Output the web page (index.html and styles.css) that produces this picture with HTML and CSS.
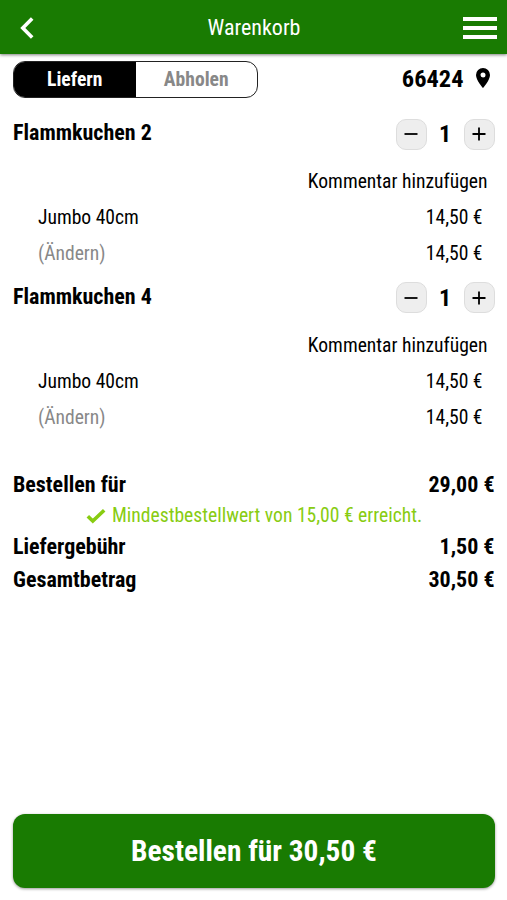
FILE: index.html
```html
<!DOCTYPE html>
<html lang="de">
<head>
    <meta charset="UTF-8">
    <meta name="viewport" content="width=device-width, initial-scale=1.0">
    <title>Warenkorb</title>
    <link rel="stylesheet" href="styles.css">
</head>
<body>
    <header class="header">
        <svg class="back" viewBox="0 0 14 22"><path d="M12.2 1.5L2.8 11l9.4 9.5"/></svg>
        <h1>Warenkorb</h1>
        <div class="burger"><span></span><span></span><span></span></div>
    </header>
    <main>
        <div class="top-row">
            <div class="toggle">
                <div class="toggle-item active">Liefern</div>
                <div class="toggle-item">Abholen</div>
            </div>
            <div class="location">
                <span>66424</span>
                <svg class="pin" viewBox="0 0 14 20"><path fill-rule="evenodd" d="M7 0a7 7 0 0 0-7 7c0 5.200 7 13 7 13s7-7.800 7-13a7 7 0 0 0-7-7zm0 4.500a2.500 2.500 0 1 1 0 5 2.500 2.500 0 0 1 0-5z"/></svg>
            </div>
        </div>

        <section class="item">
            <div class="item-head">
                <h2>Flammkuchen 2</h2>
                <div class="counter">
                    <button><svg viewBox="0 0 14 14"><path d="M.5 7h13"/></svg></button>
                    <span class="count">1</span>
                    <button><svg viewBox="0 0 14 14"><path d="M.5 7h13M7 .5v13"/></svg></button>
                </div>
            </div>
            <div class="comment">Kommentar hinzufügen</div>
            <div class="line"><span>Jumbo 40cm</span><span>14,50 €</span></div>
            <div class="line"><span class="change">(Ändern)</span><span>14,50 €</span></div>
        </section>

        <section class="item">
            <div class="item-head">
                <h2>Flammkuchen 4</h2>
                <div class="counter">
                    <button><svg viewBox="0 0 14 14"><path d="M.5 7h13"/></svg></button>
                    <span class="count">1</span>
                    <button><svg viewBox="0 0 14 14"><path d="M.5 7h13M7 .5v13"/></svg></button>
                </div>
            </div>
            <div class="comment">Kommentar hinzufügen</div>
            <div class="line"><span>Jumbo 40cm</span><span>14,50 €</span></div>
            <div class="line"><span class="change">(Ändern)</span><span>14,50 €</span></div>
        </section>

        <section class="summary">
            <div class="sum-row"><span>Bestellen für</span><span>29,00 €</span></div>
            <div class="minimum">
                <svg class="check" viewBox="0 0 20 16"><path d="M1.800 8.200l5 4.800L18.200 2.200"/></svg>
                <span>Mindestbestellwert von 15,00 € erreicht.</span>
            </div>
            <div class="sum-row"><span>Liefergebühr</span><span>1,50 €</span></div>
            <div class="sum-row"><span>Gesamtbetrag</span><span>30,50 €</span></div>
        </section>
    </main>
    <footer>
        <button class="order-btn">Bestellen für 30,50 €</button>
    </footer>
</body>
</html>
```
FILE: styles.css
```css
*{
    box-sizing: border-box;
}
body{
    margin: 0;
    height: 900px;
    display: flex;
    flex-direction: column;
    background-color: white;
    color: black;
    font-family: "Roboto Condensed", Roboto, sans-serif;
    font-stretch: 75%;
    font-size: 19.6px;
    white-space: nowrap;
}
h1, h2{
    margin: 0;
}
button{
    font: inherit;
    border: none;
    padding: 0;
}
.header{
    height: 54px;
    padding: 0 10px 0 20px;
    display: grid;
    grid-template-columns: 25px 1fr 34px;
    align-items: center;
    background-color: #197b02;
    color: white;
    box-shadow: 0 1px 3px rgba(0,0,0,0.5);
}
.header h1{
    font-size: 22px;
    font-weight: 400;
    text-align: center;
}
.back{
    width: 14px;
    height: 22px;
    margin-top: 2px;
    fill: none;
    stroke: white;
    stroke-width: 3.6;
}
.burger{
    display: flex;
    flex-direction: column;
    gap: 5px;
    margin-top: 2px;
}
.burger span{
    height: 4px;
    background-color: white;
}
main{
    flex: 1;
    padding: 7px 12.5px 0 13px;
}
.top-row{
    display: flex;
    justify-content: space-between;
    height: 36px;
}
.toggle{
    width: 245px;
    height: 37px;
    display: flex;
    border: 1px solid #222;
    border-radius: 12px;
    overflow: hidden;
    font-weight: 700;
}
.toggle-item{
    width: 122px;
    line-height: 36px;
    text-align: center;
    color: #888;
}
.toggle-item.active{
    background-color: black;
    color: white;
}
.location{
    display: flex;
    align-items: center;
    gap: 12px;
    height: 34px;
    padding-right: 5px;
    font-size: 24.4px;
    font-weight: 700;
}
.pin{
    width: 14px;
    height: 20px;
}
.item{
    height: 163.5px;
}
.top-row + .item{
    margin-top: 18px;
}
.item-head{
    height: 49px;
    display: flex;
    justify-content: space-between;
}
.item-head h2{
    font-size: 22px;
    line-height: 35px;
}
.counter{
    display: flex;
    align-items: center;
    height: 38px;
}
.counter button{
    width: 31px;
    height: 31px;
    display: flex;
    align-items: center;
    justify-content: center;
    background-color: #eee;
    border: 1px solid #ddd;
    border-radius: 10px;
}
.counter svg{
    width: 14px;
    height: 14px;
    fill: none;
    stroke: black;
    stroke-width: 1.8;
}
.count{
    width: 37px;
    text-align: center;
    font-size: 24px;
    font-weight: 700;
}
.comment{
    padding-right: 7px;
    line-height: 36px;
    text-align: right;
}
.line{
    display: flex;
    justify-content: space-between;
    padding: 0 12px 0 25px;
    line-height: 36px;
}
.line:last-child{
    line-height: 35px;
}
.change{
    color: #888;
}
.summary{
    margin-top: 26px;
}
.sum-row{
    display: flex;
    justify-content: space-between;
    font-size: 22px;
    font-weight: 700;
    line-height: 33px;
}
.minimum{
    display: flex;
    align-items: center;
    gap: 6px;
    height: 29px;
    padding-left: 73px;
    color: #8c1;
}
.check{
    width: 20px;
    height: 16px;
    fill: none;
    stroke: #8c1;
    stroke-width: 3.6;
}
footer{
    padding: 0 12px 12px 13px;
}
.order-btn{
    width: 100%;
    height: 74px;
    border-radius: 12px;
    background-color: #197b02;
    color: white;
    font-size: 29.4px;
    font-weight: 700;
    box-shadow: 0 1px 3px rgba(0,0,0,0.4);
}
```
